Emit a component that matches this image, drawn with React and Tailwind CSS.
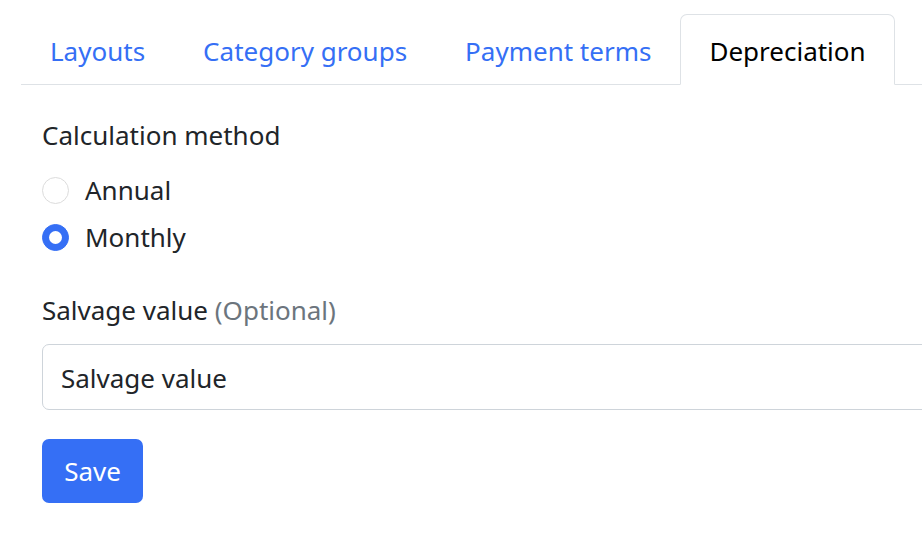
import React, { useState } from "react";

const tabs = ["Layouts", "Category groups", "Payment terms", "Depreciation"];

function Radio({ checked, label, onClick }) {
  return (
    <label className="flex items-center h-[42px] cursor-pointer" onClick={onClick}>
      <span
        className={`flex items-center justify-center w-[27px] h-[27px] rounded-full border ${
          checked ? "bg-[#356ff5] border-[#356ff5]" : "bg-white border-[#dcdcdc]"
        }`}
      >
        {checked && <span className="w-[13px] h-[13px] rounded-full bg-white" />}
      </span>
      <span className="ml-[16px]">{label}</span>
    </label>
  );
}

export default function App() {
  const [active, setActive] = useState("Depreciation");
  const [method, setMethod] = useState("Monthly");

  return (
    <div
      className="w-full min-h-screen overflow-hidden bg-white text-[#212529] text-[26px] leading-[42px]"
      style={{ fontFamily: '"Noto Sans", "Open Sans", sans-serif' }}
    >
      <div className="w-[1100px] pl-[21px] pt-[14px]">
        <nav className="flex border-b border-[#dee2e6]">
          {tabs.map((t) => (
            <button
              key={t}
              onClick={() => setActive(t)}
              className={`-mb-px h-[71px] pt-[3px] px-[28px] border rounded-t-[7px] ${
                active === t
                  ? "bg-white border-[#dee2e6] border-b-white text-black"
                  : "border-transparent text-[#356ff5]"
              }`}
            >
              {t}
            </button>
          ))}
        </nav>

        <div className="pl-[21px] pt-[29px]">
          <div className="mb-[13px]">Calculation method</div>
          <div className="flex flex-col gap-[5px]">
            <Radio label="Annual" checked={method === "Annual"} onClick={() => setMethod("Annual")} />
            <Radio label="Monthly" checked={method === "Monthly"} onClick={() => setMethod("Monthly")} />
          </div>

          <div className="mt-[31px] mb-[13px]">
            Salvage value <span className="text-[#6c757d]">(Optional)</span>
          </div>
          <input
            placeholder="Salvage value"
            className="block w-[1000px] h-[66px] px-[18px] pt-[2px] border border-[#ced4da] rounded-[7px] outline-none placeholder:text-[#212529]"
          />

          <button className="mt-[29px] w-[101px] h-[64px] rounded-[7px] bg-[#356ff5] text-white">
            Save
          </button>
        </div>
      </div>
    </div>
  );
}
